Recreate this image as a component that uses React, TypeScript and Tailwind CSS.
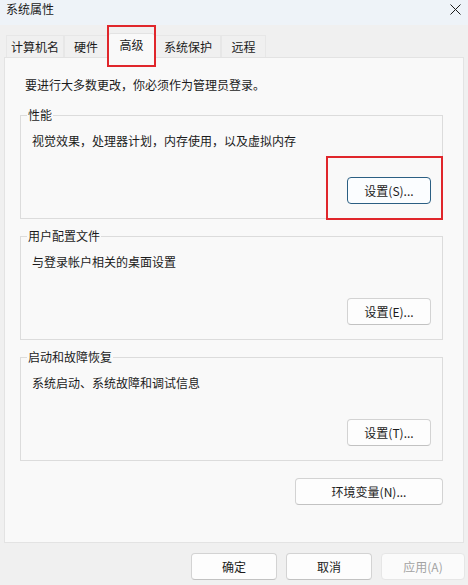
import React from 'react';

const FONT = { fontFamily: '"Noto Sans CJK SC", "Noto Sans", sans-serif' };

const tabs = [
  { label: '计算机名', w: 'w-[58px]' },
  { label: '硬件', w: 'w-[44px]' },
  { label: '高级', w: 'w-[47px]', active: true },
  { label: '系统保护', w: 'w-[66px]' },
  { label: '远程', w: 'w-[45px]' },
];

const groups = [
  { title: '性能', desc: '视觉效果，处理器计划，内存使用，以及虚拟内存', btn: '设置(S)...', focused: true },
  { title: '用户配置文件', desc: '与登录帐户相关的桌面设置', btn: '设置(E)...' },
  { title: '启动和故障恢复', desc: '系统启动、系统故障和调试信息', btn: '设置(T)...' },
];

const WinButton: React.FC<{ label: string; className?: string; focused?: boolean; disabled?: boolean }> = ({
  label,
  className = '',
  focused,
  disabled,
}) => (
  <button
    disabled={disabled}
    className={`h-[27px] rounded-[4px] border text-[12px] leading-[16px] flex items-center justify-center ${
      focused
        ? 'border-[#2b5f83] bg-[#fbfdff] text-[#1b1b1b]'
        : disabled
        ? 'border-[#e6e6e6] bg-[#fbfbfb] text-[#a3a3a3]'
        : 'border-[#d3d3d3] border-b-[#c2c2c2] bg-[#fdfdfd] text-[#1b1b1b]'
    } ${className}`}
  >
    {label}
  </button>
);

export default function App() {
  return (
    <div style={FONT} className="w-[468px] h-[585px] overflow-hidden bg-[#f0f0f0] text-[#1b1b1b] text-[12px] flex flex-col">
      {/* title bar */}
      <div className="h-[25px] shrink-0 bg-[#eef3f8] flex items-start justify-between pl-[6px] pr-[6px] pt-[1px]">
        <span className="leading-[16px]">系统属性</span>
        <svg width="11" height="11" viewBox="0 0 11 11" className="mt-[3px] mr-[1px]" fill="none" stroke="#1b1b1b" strokeWidth="1">
          <path d="M0.5 0.5 L10.5 10.5 M10.5 0.5 L0.5 10.5" />
        </svg>
      </div>

      {/* tabs */}
      <div className="mt-[8px] h-[24px] pl-[6px] flex items-end shrink-0">
        {tabs.map((t) =>
          t.active ? (
            <div
              key={t.label}
              className={`relative z-10 ${t.w} h-[25px] -mb-px bg-[#f9f9f9] border border-b-0 border-[#e3e3e3] rounded-t-[3px] flex items-start justify-center pt-[3px] leading-[16px]`}
            >
              {t.label}
              <div className="absolute -left-[2px] -right-[2px] -top-[9px] -bottom-[9px] border-2 border-[#e0262b]" />
            </div>
          ) : (
            <div
              key={t.label}
              className={`${t.w} h-[22px] border border-b-0 border-[#e7e7e7] flex items-center justify-center leading-[16px] text-[#1b1b1b]`}
            >
              {t.label}
            </div>
          )
        )}
      </div>

      {/* panel */}
      <div className="mx-[4px] h-[486px] shrink-0 border border-[#e3e3e3] bg-[#f9f9f9] flex flex-col">
        <p className="mt-[19px] pl-[20px] leading-[16px]">要进行大多数更改，你必须作为管理员登录。</p>

        {groups.map((g, i) => (
          <fieldset
            key={g.title}
            className={`${i === 0 ? 'mt-[14px]' : 'mt-[9px]'} ml-[15px] mr-[20px] border border-[#dcdcdc] p-0`}
          >
            <legend className="ml-[6px] px-[1px] leading-[16px]">{g.title}</legend>
            <p className="mt-[10px] pl-[11px] leading-[16px]">{g.desc}</p>
            <div className="mt-[28px] pb-[14px] pr-[11px] flex justify-end">
              <div className="relative">
                <WinButton label={g.btn} focused={g.focused} className="w-[84px]" />
                {g.focused && (
                  <div className="absolute -left-[21px] -right-[12px] -top-[21px] -bottom-[16px] border-2 border-[#e0262b]" />
                )}
              </div>
            </div>
          </fieldset>
        ))}

        <div className="mt-[17px] mr-[20px] flex justify-end">
          <WinButton label="环境变量(N)..." className="w-[148px]" />
        </div>
      </div>

      {/* dialog buttons */}
      <div className="mt-[10px] pr-[3px] flex justify-end gap-[9px]">
        <WinButton label="确定" className="w-[86px]" />
        <WinButton label="取消" className="w-[86px]" />
        <WinButton label="应用(A)" className="w-[84px]" disabled />
      </div>
    </div>
  );
}
